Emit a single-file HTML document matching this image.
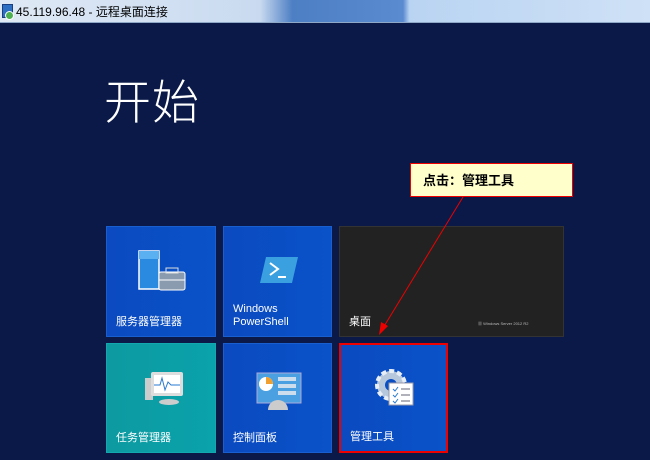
<!DOCTYPE html>
<html><head><meta charset="utf-8"><style>
*{margin:0;padding:0;box-sizing:border-box}
body{width:650px;height:460px;overflow:hidden;background:#0a1947;font-family:"Liberation Sans","Noto Sans CJK SC",sans-serif;position:relative}
.tb{position:absolute;left:0;top:0;width:650px;height:23px;background:linear-gradient(90deg,#dfe9f5 0,#c9daf0 40%,#4d7fc4 45%,#5a8ad0 62%,#b9d4f2 63%,#cfe1f6 100%);border-bottom:1px solid #8fa8c8}
.tb span{position:absolute;left:16px;top:3px;font-size:12px;color:#000}
.ic{position:absolute;left:2px;top:4px;width:11px;height:14px;background:#2d6fc2;border:1px solid #1a3f80}
.ic:after{content:"";position:absolute;left:2px;top:6px;width:7px;height:7px;border-radius:50%;background:#4caf50;border:1px solid #fff}
.h{position:absolute;left:104px;top:64px;font-size:47px;color:#fff;font-family:"Noto Sans CJK SC",sans-serif;font-weight:300;letter-spacing:1px}
.t{position:absolute;background:linear-gradient(90deg,#0b4ac0,#0a52c8);border:1px solid #1a5fd0}
.t .l{position:absolute;left:9px;bottom:7px;color:#fff;font-size:11px;line-height:13px}
.callout{position:absolute;left:410px;top:163px;width:163px;height:34px;background:#ffffcc;border:1px solid #e00;font-size:13px;font-weight:bold;color:#000;padding:8px 0 0 12px;font-family:"Noto Sans CJK SC",sans-serif;line-height:16px}
</style></head><body>
<div class="tb"><div class="ic"></div><span>45.119.96.48 - 远程桌面连接</span></div>
<div class="h">开始</div>

<div class="t" style="left:106px;top:226px;width:110px;height:111px">
<svg style="position:absolute;left:30px;top:22px" width="50" height="50"><rect x="2" y="2" width="20" height="38" fill="#2a8ae0" stroke="#fff" stroke-width="1.5"/><rect x="2" y="2" width="20" height="8" fill="#5ab0f0"/><rect x="22" y="23" width="26" height="18" rx="2" fill="#8a9bb0" stroke="#fff" stroke-width="1"/><rect x="29" y="19" width="12" height="5" fill="none" stroke="#ddd"/><line x1="22" y1="31" x2="48" y2="31" stroke="#fff"/></svg>
<div class="l">服务器管理器</div></div>

<div class="t" style="left:223px;top:226px;width:109px;height:111px">
<svg style="position:absolute;left:36px;top:28px" width="40" height="30"><polygon points="6,2 38,2 32,28 0,28" fill="#3aa0e0"/><polyline points="10,8 18,14 10,20" fill="none" stroke="#fff" stroke-width="2"/><line x1="18" y1="22" x2="26" y2="22" stroke="#fff" stroke-width="2"/></svg>
<div class="l">Windows<br>PowerShell</div></div>

<div class="t" style="left:339px;top:226px;width:225px;height:111px;background:#222;border-color:#333">
<div class="l">桌面</div>
<div style="position:absolute;left:138px;bottom:9px;font-size:4px;color:#bbb">▦ Windows Server 2012 R2</div></div>

<div class="t" style="left:106px;top:343px;width:110px;height:110px;background:linear-gradient(90deg,#0d9aa0,#0aa2ac);border-color:#13a8b0">
<svg style="position:absolute;left:34px;top:24px" width="46" height="40"><rect x="4" y="10" width="8" height="22" fill="#ccc"/><rect x="10" y="4" width="32" height="24" rx="2" fill="#ddd"/><rect x="13" y="7" width="26" height="18" fill="#fff"/><polyline points="13,17 19,17 21,10 24,22 27,14 30,17 39,17" fill="none" stroke="#2a7ad0"/><ellipse cx="28" cy="34" rx="10" ry="3" fill="#ccc"/></svg>
<div class="l">任务管理器</div></div>

<div class="t" style="left:223px;top:343px;width:109px;height:110px">
<svg style="position:absolute;left:32px;top:28px" width="46" height="40"><rect x="1" y="1" width="44" height="30" fill="#4aa0e0" stroke="#aad"/><circle cx="10" cy="12" r="7" fill="#fff"/><path d="M10 12V5a7 7 0 0 1 7 7z" fill="#f0a030"/><rect x="22" y="5" width="18" height="4" fill="#cde"/><rect x="22" y="12" width="18" height="4" fill="#cde"/><rect x="22" y="19" width="18" height="4" fill="#cde"/><path d="M12 38a10 10 0 0 1 20 0z" fill="#ccc"/></svg>
<div class="l">控制面板</div></div>

<div class="t" style="left:339px;top:343px;width:109px;height:110px;border:2px solid #e00">
<svg style="position:absolute;left:32px;top:22px" width="46" height="46"><circle cx="18" cy="18" r="14" fill="#b8c8dc" stroke="#e8eef6" stroke-width="4" stroke-dasharray="5 3"/><circle cx="18" cy="18" r="6" fill="#0a4ec4"/><rect x="16" y="16" width="24" height="22" fill="#fff" stroke="#99a"/><path d="M20 22l2 2 3-4M20 28l2 2 3-4M20 34l2 2 3-4" stroke="#2a7ad0" fill="none"/><path d="M28 22h9M28 28h9M28 34h9" stroke="#667"/></svg>
<div class="l">管理工具</div></div>

<div class="callout">点击：管理工具</div>
<svg style="position:absolute;left:0;top:0" width="650" height="460"><line x1="463" y1="197" x2="383" y2="328" stroke="#e00" stroke-width="1"/><polygon points="379,335 381,322 388,326" fill="#e00"/></svg>
</body></html>
